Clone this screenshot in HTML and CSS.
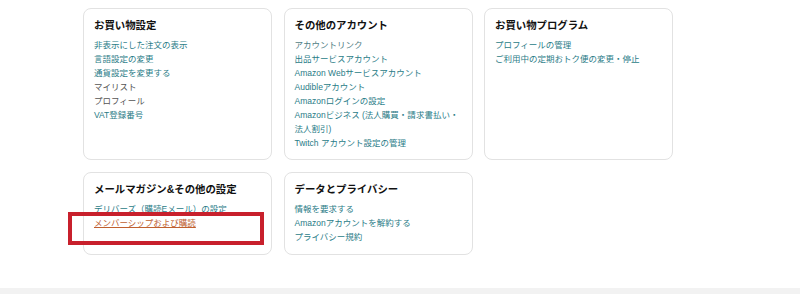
FILE: index.html
```html
<!DOCTYPE html>
<html lang="ja">
<head>
<meta charset="utf-8">
<title>アカウントサービス</title>
<link rel="stylesheet" href="styles.css">
</head>
<body>
<div class="page">
  <div class="grid">
    <div class="card">
      <h3>お買い物設定</h3>
      <ul>
        <li><a href="#">非表示にした注文の表示</a></li>
        <li><a href="#">言語設定の変更</a></li>
        <li><a href="#">通貨設定を変更する</a></li>
        <li><a href="#" class="muted">マイリスト</a></li>
        <li><a href="#" class="muted">プロフィール</a></li>
        <li><a href="#">VAT登録番号</a></li>
      </ul>
    </div>
    <div class="card">
      <h3>その他のアカウント</h3>
      <ul>
        <li><a href="#" class="soft">アカウントリンク</a></li>
        <li><a href="#">出品サービスアカウント</a></li>
        <li><a href="#">Amazon Webサービスアカウント</a></li>
        <li><a href="#">Audibleアカウント</a></li>
        <li><a href="#">Amazonログインの設定</a></li>
        <li><a href="#">Amazonビジネス (法人購買・請求書払い・法人割引)</a></li>
        <li><a href="#">Twitch アカウント設定の管理</a></li>
      </ul>
    </div>
    <div class="card">
      <h3>お買い物プログラム</h3>
      <ul>
        <li><a href="#">プロフィールの管理</a></li>
        <li><a href="#">ご利用中の定期おトク便の変更・停止</a></li>
      </ul>
    </div>
    <div class="card row2">
      <h3>メールマガジン&amp;その他の設定</h3>
      <ul>
        <li><a href="#">デリバーズ（購読Eメール）の設定</a></li>
        <li><a href="#" class="hover">メンバーシップおよび購読</a></li>
      </ul>
    </div>
    <div class="card row2">
      <h3>データとプライバシー</h3>
      <ul>
        <li><a href="#">情報を要求する</a></li>
        <li><a href="#">Amazonアカウントを解約する</a></li>
        <li><a href="#">プライバシー規約</a></li>
      </ul>
    </div>
  </div>
  <div class="band"></div>
  <div class="highlight"></div>
</div>
</body>
</html>
```
FILE: styles.css
```css
html, body {
  margin: 0;
  padding: 0;
  background: #fff;
}
body {
  width: 800px;
  height: 294px;
  overflow: hidden;
  font-family: "Liberation Sans", "Noto Sans CJK JP", sans-serif;
  color: #111;
}
.page {
  position: relative;
  padding-top: 8px;
}
.grid {
  display: grid;
  grid-template-columns: repeat(3, 189px);
  column-gap: 11.5px;
  row-gap: 12px;
  margin-left: 83px;
}
.card {
  border: 1px solid #e2e2e2;
  border-radius: 8px;
  padding: 9px 10px 9px 10px;
}
.card.row2 {
  padding-bottom: 10px;
}
.card h3 {
  margin: 0 0 4px 0;
  font-size: 10.4px;
  line-height: 16px;
  font-weight: bold;
  color: #111;
}
.card ul {
  list-style: none;
  margin: 0;
  padding: 0;
}
.card li {
  font-size: 8.5px;
  line-height: 14px;
}
.card a {
  color: #2a7c87;
  text-decoration: none;
}
.card a.muted {
  color: #555;
}
.card a.soft {
  color: #4f7d84;
}
.card a.hover {
  color: #c0602f;
  text-decoration: underline;
}
.band {
  margin-top: 33px;
  height: 6px;
  background: #f2f2f2;
}
.highlight {
  position: absolute;
  left: 68px;
  top: 212px;
  width: 196px;
  height: 33px;
  box-sizing: border-box;
  border: 4px solid #c8202c;
}
```
